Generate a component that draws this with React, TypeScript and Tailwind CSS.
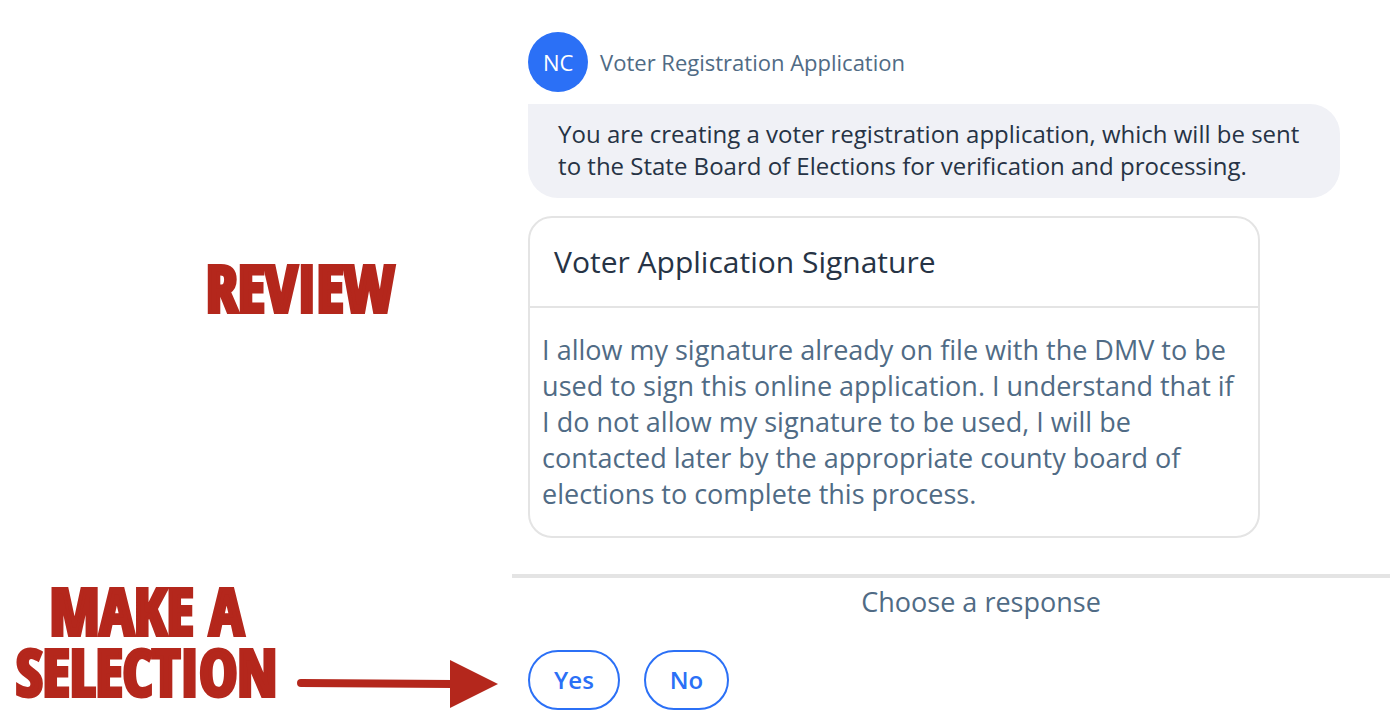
import type { ReactNode } from "react";

const responses = ["Yes", "No"];

function Callout({ children }: { children: ReactNode }) {
  return (
    <p className="font-['Open_Sans_Condensed','Roboto_Condensed','Liberation_Sans_Narrow',sans-serif] text-[64px] font-black uppercase leading-[61px] text-center text-[#b4271c] [-webkit-text-stroke:4px_#b4271c]">
      {children}
    </p>
  );
}

function Arrow() {
  return (
    <svg viewBox="0 0 202 48" className="w-[202px] h-12 shrink-0" aria-hidden="true">
      <path d="M4 23L156 24" stroke="#b4271c" strokeWidth="8" strokeLinecap="round" />
      <path d="M153 0L201 24L153 48Z" fill="#b4271c" />
    </svg>
  );
}

export default function App() {
  return (
    <main className="grid grid-cols-[7fr_12fr] bg-white font-['Open_Sans',sans-serif] text-[#263345]">
      <div className="flex items-center justify-center pl-22">
        <Callout>Review</Callout>
      </div>

      <section className="pl-4 pt-8 pb-9 pr-[50px]">
        <header className="flex items-center gap-3">
          <div className="flex size-15 items-center justify-center rounded-full bg-[#2b70f6] text-[22px] font-medium text-white">
            NC
          </div>
          <span className="text-[22px] text-[#506b85]">Voter Registration Application</span>
        </header>

        <p className="mt-3 rounded-[30px] rounded-tl-none bg-[#f0f1f6] px-[30px] pt-3.5 pb-4 text-2xl leading-8">
          You are creating a voter registration application, which will be sent to the State Board of
          Elections for verification and processing.
        </p>

        {/* Signature card */}
        <article className="mt-[18px] mr-20 rounded-3xl border-2 border-[#e4e4e4]">
          <h1 className="border-b-2 border-[#e4e4e4] px-6 py-6 text-3xl leading-10">
            Voter Application Signature
          </h1>
          <p className="px-3 py-6 text-[27px] leading-9 text-[#506b85]">
            I allow my signature already on file with the DMV to be used to sign this online
            application. I understand that if I do not allow my signature to be used, I will be
            contacted later by the appropriate county board of elections to complete this process.
          </p>
        </article>
      </section>

      <div className="flex items-end justify-between pl-4 pr-[13px] pb-3">
        <div className="pb-1.5">
          <Callout>
            Make a<br />
            Selection
          </Callout>
        </div>
        <Arrow />
      </div>

      {/* Response bar */}
      <section className="border-t-4 border-[#e4e4e4] pb-[10px]">
        <h2 className="pl-15 pt-1 text-center text-[27px] leading-10 text-[#506b85]">
          Choose a response
        </h2>
        <div className="mt-7 flex gap-6 pl-4">
          {responses.map((label) => (
            <button
              key={label}
              type="button"
              className="h-15 rounded-full border-2 border-[#2b70f6] px-6 text-2xl font-semibold text-[#2b70f6] cursor-pointer"
            >
              {label}
            </button>
          ))}
        </div>
      </section>
    </main>
  );
}
